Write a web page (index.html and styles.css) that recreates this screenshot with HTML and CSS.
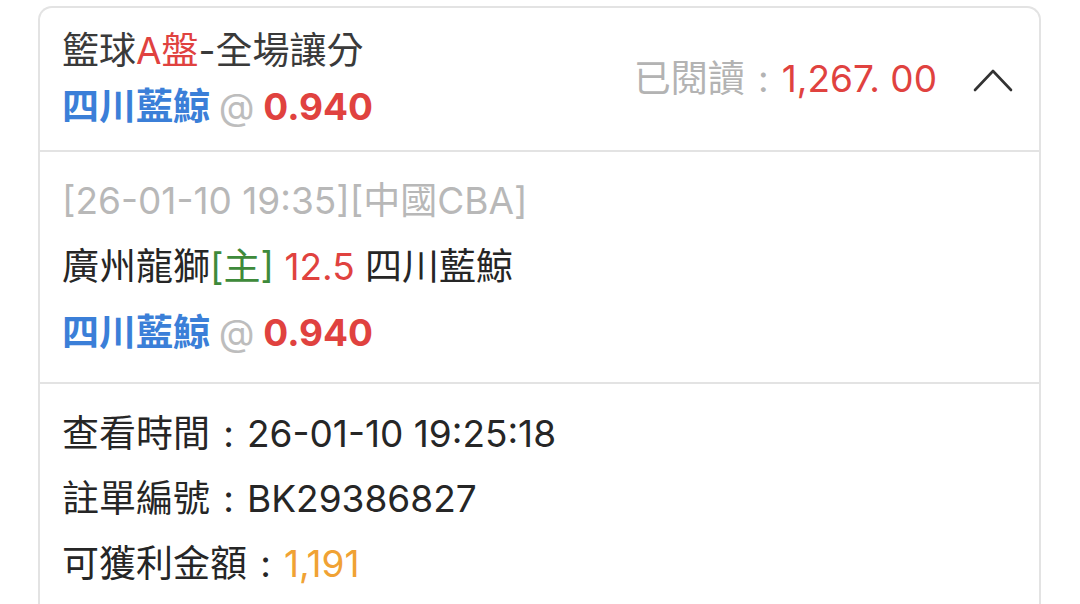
FILE: index.html
```html
<!DOCTYPE html>
<html lang="zh-Hant">
<head>
  <meta charset="UTF-8" />
  <meta name="viewport" content="width=device-width, initial-scale=1.0" />
  <title>注單詳情</title>
  <link rel="stylesheet" href="styles.css">
</head>
<body>
  <div class="card">
    <div class="card-head">
      <div class="head-left">
        <div class="title">籃球<span class="red">A盤</span>-全場讓分</div>
        <div class="pick"><span class="team">四川藍鯨</span> <span class="at">@</span> <span class="odds">0.940</span></div>
      </div>
      <div class="head-right">
        <span class="read">已閱讀<span class="colon">:</span></span><span class="amount">1,267. 00</span>
        <svg class="chevron" width="40" height="26" viewBox="0 0 40 26"><path d="M2 24 L20 5 L38 24" fill="none" stroke="#333" stroke-width="2.6" stroke-linecap="round" stroke-linejoin="round"/></svg>
      </div>
    </div>
    <div class="section">
      <div class="meta">[26-01-10 19:35][中國CBA]</div>
      <div class="line">廣州龍獅<span class="green">[主]</span> <span class="red">12.5</span> 四川藍鯨</div>
      <div class="pick"><span class="team">四川藍鯨</span> <span class="at">@</span> <span class="odds">0.940</span></div>
    </div>
    <div class="section info">
      <div class="line">查看時間<span class="colon">:</span>26-01-10 19:25:18</div>
      <div class="line">註單編號<span class="colon">:</span>BK29386827</div>
      <div class="line">可獲利金額<span class="colon">:</span><span class="orange">1,191</span></div>
    </div>
  </div>
</body>
</html>
```

FILE: styles.css
```css
body { margin: 0; background: #fff; font-family: Inter, "Noto Sans CJK TC", sans-serif; font-size: 37px; color: #262626; }
.card { margin: 6px 0 0 38px; width: 1003px; border: 2px solid #e3e3e3; border-bottom: none; border-radius: 14px 14px 0 0; box-sizing: border-box; }
.card-head { display: flex; justify-content: space-between; align-items: center; padding: 15px 26px 15px 22px; line-height: 56px; border-bottom: 2px solid #e3e3e3; }
.title { color: #3a3a3a; }
.head-right { display: flex; align-items: center; }
.colon { display: inline-block; width: 1em; text-align: center; }
.read { color: #b3b3b3; }
.amount { color: #e0423f; }
.chevron { margin-left: 36px; }
.section { padding: 16px 22px; line-height: 66px; border-bottom: 2px solid #e3e3e3; }
.section.info { padding-top: 17px; line-height: 65px; border-bottom: none; }
.meta { color: #b8b8b8; }
.pick { font-weight: 700; }
.team { color: #3b7fd8; }
.at { color: #bdbdbd; font-weight: 400; }
.odds { color: #e0423f; }
.red { color: #e0423f; }
.green { color: #3e8a3a; }
.orange { color: #f0a234; }
```
